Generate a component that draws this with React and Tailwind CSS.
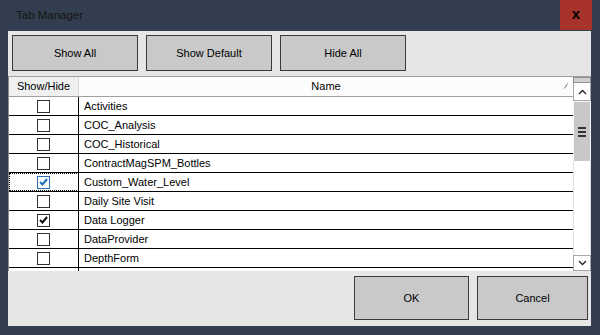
import React from "react";

const rows = [
    { name: "Activities", checked: false },
    { name: "COC_Analysis", checked: false },
    { name: "COC_Historical", checked: false },
    { name: "ContractMagSPM_Bottles", checked: false },
    { name: "Custom_Water_Level", checked: true, focus: true },
    { name: "Daily Site Visit", checked: false },
    { name: "Data Logger", checked: true },
    { name: "DataProvider", checked: false },
    { name: "DepthForm", checked: false },
    { name: "", checked: false },
];

const CheckBox = ({ checked, focus }) => {
    return (
        <div
            className={`flex h-[13px] w-[13px] items-center justify-center border bg-white ${
                focus ? "border-[#2a6db0]" : "border-[#333333]"
            }`}
        >
            {checked && (
                <svg width="9" height="8" viewBox="0 0 9 8">
                    <path
                        d="M1 4 L3.5 6.5 L8 1"
                        fill="none"
                        stroke={focus ? "#1f6fc5" : "#111111"}
                        strokeWidth="2"
                    />
                </svg>
            )}
        </div>
    );
};

const Chevron = ({ up }) => (
    <svg width="9" height="6" viewBox="0 0 9 6">
        <path
            d={up ? "M1 5 L4.5 1.5 L8 5" : "M1 1 L4.5 4.5 L8 1"}
            fill="none"
            stroke="#222222"
            strokeWidth="1.3"
        />
    </svg>
);

const WinButton = ({ label, width, height }) => {
    return (
        <button
            type="button"
            className={`${width} ${height} flex items-center justify-center border border-[#3a3a3a] bg-[#c9c9c9] text-[11px] text-black`}
        >
            {label}
        </button>
    );
};

export default function App() {
    return (
        <div className="flex h-[335px] w-[600px] flex-col bg-[#323e4f] font-['Liberation_Sans',Arial,sans-serif]">
            {/* title bar */}
            <div className="flex h-[31px] shrink-0 items-start">
                <span className="mt-[8px] pl-[16px] text-[11.5px] leading-[14px] text-[#141414]">
                    Tab Manager
                </span>
                <div className="ml-auto mr-[8px] flex h-[30px] w-[32px] items-center justify-center bg-[#a8332a]">
                    <span className="-mt-[3px] text-[15px] font-bold leading-none text-black">x</span>
                </div>
            </div>

            {/* body */}
            <div className="ml-[8px] flex h-[295px] w-[583px] flex-col bg-[#e6e6e6]">
                <div className="flex gap-[8px] pl-[4px] pt-[4px]">
                    <WinButton label="Show All" width="w-[126px]" height="h-[36px]" />
                    <WinButton label="Show Default" width="w-[126px]" height="h-[36px]" />
                    <WinButton label="Hide All" width="w-[126px]" height="h-[36px]" />
                </div>

                {/* grid */}
                <div className="mt-[5px] flex h-[195px] border-t border-[#a0a0a0]">
                    <div className="flex w-[565px] flex-col overflow-hidden border-l border-[#8c8c8c] bg-white text-[11px] text-black">
                        <div className="flex h-[20px] shrink-0 border-b border-[#a0a0a0]">
                            <div className="flex w-[70px] items-center justify-center border-r border-[#d8d8d8] bg-[#f0f0f0]">
                                Show/Hide
                            </div>
                            <div className="relative flex flex-1 items-center justify-center bg-[#fcfcfc]">
                                Name
                                <svg
                                    className="absolute right-[5px] top-[6px]"
                                    width="4"
                                    height="6"
                                    viewBox="0 0 4 6"
                                >
                                    <path d="M3.5 0.5 L0.5 5.5" stroke="#777777" strokeWidth="1" />
                                </svg>
                            </div>
                        </div>
                        {rows.map((row, i) => (
                            <div key={i} className="flex h-[19px] shrink-0 border-b border-black">
                                <div
                                    className={`flex w-[70px] items-center justify-center border-r border-black ${
                                        row.focus ? "outline-1 -outline-offset-1 outline-dotted outline-black" : ""
                                    }`}
                                >
                                    <CheckBox checked={row.checked} focus={row.focus} />
                                </div>
                                <div className="flex flex-1 items-center pl-[5px]">{row.name}</div>
                            </div>
                        ))}
                    </div>

                    {/* scrollbar */}
                    <div className="flex w-[18px] flex-col bg-[#f4f4f4]">
                        <div className="h-[6px] border border-[#8f8f8f] bg-[#d0d0d0]" />
                        <div className="flex h-[18px] items-center justify-center border-x border-b border-[#a8a8a8] bg-white">
                            <Chevron up />
                        </div>
                        <div className="mx-[1px] mt-[1px] flex h-[59px] flex-col items-center justify-center gap-[2px] bg-[#c8c8c8]">
                            <div className="h-[2px] w-[8px] bg-[#333333]" />
                            <div className="h-[2px] w-[8px] bg-[#333333]" />
                            <div className="h-[2px] w-[8px] bg-[#333333]" />
                        </div>
                        <div className="flex-1 border-x border-[#e0e0e0] bg-white" />
                        <div className="flex h-[16px] items-center justify-center border border-[#a8a8a8] bg-white">
                            <Chevron />
                        </div>
                    </div>
                </div>

                <div className="mt-[5px] flex justify-end gap-[8px] pr-[3px]">
                    <WinButton label="OK" width="w-[115px]" height="h-[44px]" />
                    <WinButton label="Cancel" width="w-[111px]" height="h-[44px]" />
                </div>
            </div>
        </div>
    );
}
